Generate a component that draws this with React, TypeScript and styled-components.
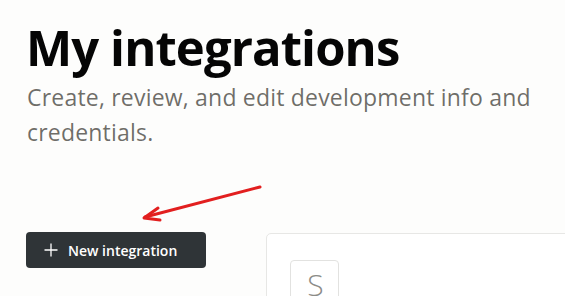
import styled, { createGlobalStyle } from "styled-components"

const GlobalStyle = createGlobalStyle`
  html, body {
    margin: 0;
    padding: 0;
    background: #fdfdfc;
    overflow: hidden;
  }
  body {
    font-family: "Open Sans", "Noto Sans", sans-serif;
  }
`

const Page = styled.div`
  position: relative;
  width: 565px;
  height: 296px;
  padding: 15px 0 0 26px;
  box-sizing: border-box;
  overflow: hidden;
`

const Title = styled.h1`
  margin: 0;
  font-size: 49px;
  font-weight: 700;
  line-height: 64px;
  letter-spacing: -0.9px;
  color: #050505;
`

const Subtitle = styled.p`
  margin: 1px 0 0 1px;
  width: 530px;
  font-size: 23px;
  line-height: 35px;
  letter-spacing: 0.2px;
  color: rgba(55, 53, 47, 0.72);
`

const Content = styled.div`
  display: flex;
  align-items: flex-start;
  gap: 60px;
  margin-top: 82px;
`

const NewButton = styled.button`
  flex: none;
  display: flex;
  align-items: center;
  gap: 10px;
  width: 180px;
  height: 36px;
  padding: 0 0 0 18px;
  box-sizing: border-box;
  border: none;
  border-radius: 4px;
  background: #2f3437;
  color: #ffffff;
  font-family: "Open Sans", sans-serif;
  font-size: 14px;
  font-weight: 600;
  cursor: pointer;
`

const Card = styled.div`
  flex: none;
  width: 320px;
  height: 120px;
  margin-top: 1px;
  padding: 26px 0 0 23px;
  box-sizing: border-box;
  background: #ffffff;
  border: 1px solid #e7e7e5;
  border-radius: 5px;
`

const Avatar = styled.div`
  display: flex;
  justify-content: center;
  width: 49px;
  height: 50px;
  padding: 4px 0 0 2px;
  box-sizing: border-box;
  border: 1px solid #e2e2e0;
  border-radius: 4px;
  font-size: 30px;
  font-weight: 300;
  line-height: 40px;
  color: #8c8c88;
`

const Arrow = styled.svg`
  position: absolute;
  left: 136px;
  top: 180px;
`

export default function App() {
  return (
    <>
      <GlobalStyle />
      <Page>
        <Title>My integrations</Title>
        <Subtitle>Create, review, and edit development info and credentials.</Subtitle>
        <Content>
          <NewButton>
            <svg width="14" height="14" viewBox="0 0 14 14">
              <path d="M7 0.5v13M0.5 7h13" stroke="#ffffff" strokeWidth="1.3" />
            </svg>
            New integration
          </NewButton>
          <Card>
            <Avatar>S</Avatar>
          </Card>
        </Content>
        <Arrow width="130" height="45" viewBox="0 0 130 45">
          <path d="M124 7 L9 37" stroke="#e21f1f" strokeWidth="3" strokeLinecap="round" fill="none" />
          <path d="M22 28 L8 38 L24 40" stroke="#e21f1f" strokeWidth="3" strokeLinecap="round" strokeLinejoin="round" fill="none" />
        </Arrow>
      </Page>
    </>
  )
}
